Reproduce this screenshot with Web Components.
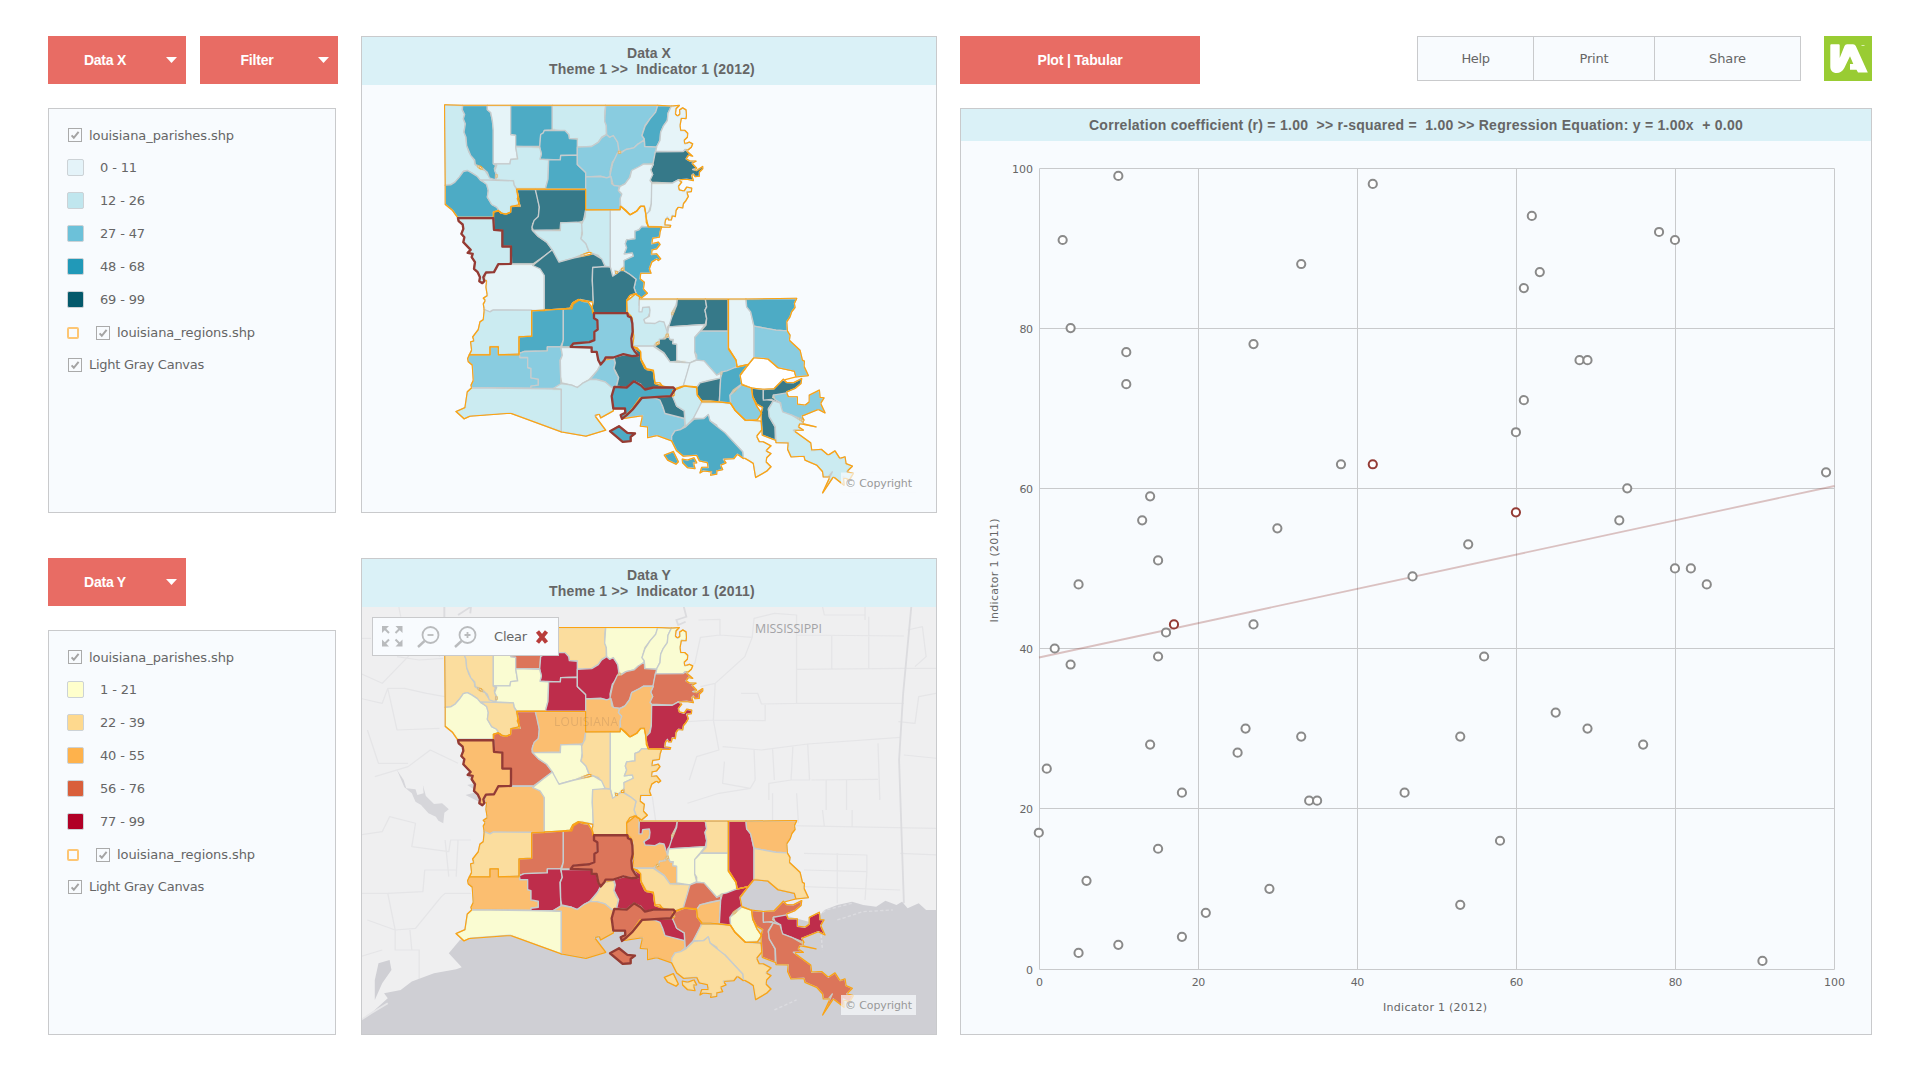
<!DOCTYPE html>
<html lang="en">
<head>
<meta charset="utf-8">
<title>Double Map</title>
<style>
body{margin:0;background:#fff;color:#666;font:13px "DejaVu Sans",Verdana,sans-serif}
</style>
</head>
<body>
<double-map></double-map>
<script>
const define=(n,c)=>customElements.define(n,c);
class Base extends HTMLElement{
  constructor(){super();this.attachShadow({mode:'open'});}
  connectedCallback(){this.shadowRoot.innerHTML=`<style>*{box-sizing:border-box}${this.css()}</style>${this.html()}`;this.ready&&this.ready();}
}

/* One line of text, spaced to a fixed measure */
define('fit-text',class extends Base{
  css(){return ':host{display:inline-block;white-space:pre;line-height:normal}';}
  html(){return '<span><slot></slot></span>';}
  ready(){
    const w=+this.getAttribute('w'),n=this.textContent.length,s=this.shadowRoot.querySelector('span');
    this.style.width=w+'px';
    s.style.letterSpacing=((w-s.getBoundingClientRect().width)/n)+'px';
  }
});

define('red-button',class extends Base{
  css(){return `:host{display:flex;align-items:center;width:138px;height:48px;background:#e86c64;color:#fff;font:bold 14px "Liberation Sans",Arial,sans-serif}
  .t{flex:1;display:flex;justify-content:center;padding-right:4px}i{width:11px;height:6px;background:#fff;clip-path:polygon(0 0,100% 0,50% 100%);margin-right:9px}
  :host([plain]) i{display:none}:host([plain]) .t{padding:0}`;}
  html(){return '<div class="t"><slot></slot></div><i></i>';}
});

define('check-box',class extends Base{
  css(){return ':host{display:block;width:14px;height:14px;flex:none}svg{display:block}';}
  html(){return '<svg width="14" height="14"><rect x=".5" y=".5" width="13" height="13" fill="#f8fbfe" stroke="#aaa"/><path d="M3.6 7.4 5.8 9.8 10.6 3.9" fill="none" stroke="#a4a4a4" stroke-width="2"/></svg>';}
});

define('map-legend',class extends Base{
  css(){return `:host{display:block;width:288px;height:405px;border:1px solid #c9cacc;background:#f8fbfe;padding:10px 0 0 18px}
  .r{display:flex;align-items:center;height:33px}.a{height:32px;padding-left:1px}.z{height:31px;padding-left:1px}
  .r fit-text{margin-left:7px}.r.c fit-text{margin-left:16px}
  .s{width:17px;height:17px;border:1.5px solid #ccd2d6;border-radius:2px}
  .o{width:12px;height:12px;border:2px solid #fdc674;border-radius:2px;margin-right:17px}`;}
  html(){
    const rows=this.getAttribute('rows').split(',').map(r=>{const[t,c,w]=r.split(':');return `<div class="r c"><span class="s" style="background:${c}"></span><fit-text w="${w}">${t}</fit-text></div>`}).join('');
    return `<div class="r a"><check-box></check-box><fit-text w="145">louisiana_parishes.shp</fit-text></div>${rows}
    <div class="r"><span class="o"></span><check-box></check-box><fit-text w="138">louisiana_regions.shp</fit-text></div>
    <div class="r z"><check-box></check-box><fit-text w="115">Light Gray Canvas</fit-text></div>`;
  }
});

/* Parishes: X colour, Y colour, region, origin, selected, outline */
const PX={a:'#e6f4f8',b:'#cbebf1',c:'#89cce0',d:'#4dabc5',e:'#367989'};
const PY={a:'#fafcd2',b:'#fbdd9e',c:'#fbbe70',d:'#dc755a',e:'#be2d4b'};
const OFF={N:[0,0],W:[0,569],E:[510,569]};
const PARISHES=`b b 1 N 0 44,43 98,45 97,58 104,72 100,85 106,100 102,125 108,140 110,165 117,185 133,210 135,222 150,234 165,240 175,255 190,266 197,270 150,270 142,258 125,247 112,240 100,243 88,260 75,275 62,283 46,284
d b 1 N 0 98,45 172,45 172,58 182,66 187,90 190,120 190,220 197,225 193,235 197,248 196,268 178,262 172,245 152,228 136,222 134,208 122,195 110,165 108,140 102,125 106,100 100,85 104,72 97,58
a a 1 N 0 172,45 242,45 242,132 257,134 257,168 263,205 242,207 240,220 190,220 190,120 187,90 182,66 172,58
d d 1 N 0 242,45 367,45 367,118 343,120 340,128 332,132 330,168 257,168 257,134 242,132
b b 1 N 0 367,45 527,45 525,60 524,90 529,105 529,132 515,140 505,155 485,168 442,170 442,145 418,144 416,132 405,122 367,118
d e 1 N 0 343,120 405,120 416,132 418,144 442,146 442,194 392,195 391,208 330,206 334,190 329,170 332,132 340,127
b a 1 N 0 257,168 329,170 334,190 330,206 356,208 354,266 346,295 260,295 252,283 250,271 197,268 202,256 194,240 200,224 192,220 240,220 242,207 263,205
d e 1 N 0 356,208 391,208 392,195 442,194 442,222 467,246 467,296 346,296 354,266
c e 1 N 0 442,170 485,168 505,156 515,142 530,132 539,140 550,135 560,150 565,160 566,182 555,205 547,215 540,245 543,258 530,262 512,257 467,259 467,246 442,222
c a 1 N 0 527,45 683,45 678,65 660,85 645,105 636,135 643,145 637,160 625,160 612,172 588,177 573,185 567,180 563,155 550,135 539,140 530,132 529,105 524,92
d a 1 N 0 683,45 724,47 714,68 712,90 700,107 692,125 690,148 680,170 644,168 643,145 636,135 645,108 660,85 677,65
a a 1 N 0 724,47 748,45 738,55 736,70 743,77 750,70 749,58 758,52 768,58 769,75 768,84 754,83 750,105 752,120 765,120 773,128 772,140 762,150 765,160 778,155 788,160 784,170 775,178 765,177 760,183 676,183 680,168 690,150 692,125 700,107 712,90 714,68
c d 1 N 0 573,187 588,177 612,172 625,160 643,148 644,168 680,170 676,185 670,220 640,221 630,228 605,240 598,262 585,280 568,288 550,285 545,265 540,255 548,218 562,188
e d 1 N 0 676,184 760,183 766,178 788,197 776,194 768,205 780,212 798,212 786,218 800,233 788,237 800,240 818,228 818,235 808,245 808,257 795,258 790,250 785,255 790,270 770,266 745,268 727,278 665,275 658,265 668,252 662,238 668,225 672,205
a c 1 N 0 640,221 670,221 662,238 668,252 660,270 668,280 666,300 664,340 655,368 648,370 643,348 632,347 620,362 600,373 588,360 572,347 570,320 575,310 565,300 570,288 585,280 600,260 605,240 628,228
c c 1 N 0 467,259 512,258 530,262 543,258 545,280 552,285 568,287 565,300 575,312 570,325 570,357 467,358
a e 1 N 0 665,278 727,278 745,268 755,275 745,288 748,298 762,302 770,290 785,293 784,303 770,305 775,318 768,330 760,340 758,352 745,350 738,360 736,378 727,375 724,388 716,388 712,380 706,390 704,403 722,405 720,410 655,409 649,395 648,372 660,360 664,340
d a 1 N 0 46,284 62,283 75,275 88,260 100,243 112,240 125,247 142,258 152,270 170,280 175,300 172,320 185,342 200,350 208,362 192,364 190,380 82,380 68,360 46,342
b b 1 N 0 152,268 250,271 252,283 260,297 262,312 267,325 265,343 243,348 242,365 228,371 215,368 208,362 200,350 185,342 172,320 175,300 170,282
e d 2 N 0 260,297 316,297 322,315 328,350 325,380 308,400 306,418 325,438 350,455 367,478 345,495 310,520 245,520 243,468 217,468 217,420 192,418 190,365 205,360 213,368 228,371 242,365 243,348 271,347 262,325 265,315
e c 2 N 0 316,297 467,297 467,358 460,392 440,397 392,397 391,418 310,420 306,410 312,390 325,378 328,350
b a 2 N 0 308,420 391,420 392,397 440,395 456,397 457,420 453,445 468,460 477,485 430,503 387,515 375,500 367,478 350,455 325,438
b b 2 N 0 467,358 541,358 541,530 525,527 515,510 505,495 490,490 478,485 468,460 453,445 457,430 455,400 465,380
a a 2 N 0 541,358 570,358 572,347 600,373 620,362 632,347 643,347 650,390 655,409 635,408 627,418 615,422 615,445 590,448 586,460 590,472 583,490 607,487 610,497 582,510 585,525 565,545 555,540 558,555 548,558 541,530
d b 2 N 0 655,409 695,409 690,425 688,440 668,443 665,460 685,455 690,462 680,475 666,478 664,492 680,490 692,505 685,510 680,505 665,515 658,535 663,548 632,548 630,565 643,575 640,595 652,608 635,622 622,615 618,608 612,592 618,566 600,552 582,540 582,510 610,497 607,487 583,490 590,472 586,460 590,448 615,445 615,422 627,418 635,408
b c 2 N 1 84,383 190,383 192,418 217,420 217,468 243,468 243,520 205,521 192,545 168,546 160,560 163,572 157,578 148,572 150,560 143,545 132,535 135,515 125,500 128,490 113,487 122,478 100,455 103,440 94,430 100,415 98,402 86,392
a c 2 N 0 205,521 308,521 335,535 343,550 343,660 185,660 180,665 163,658 160,640 166,630 160,623 172,615 168,590 170,572 163,565 168,546 192,545
e a 2 N 0 308,525 345,495 367,478 387,515 430,503 490,490 515,505 525,527 515,532 488,531 487,570 490,635 475,632 450,627 430,640 425,655 343,658 343,555 330,535
e b 2 N 0 488,531 525,528 541,530 548,557 558,550 572,540 580,540 600,552 618,566 612,592 618,608 600,615 590,630 590,668 488,668 486,650 490,635 487,570
b b 2 W 0 163,88 180,95 190,89 305,90 305,168 267,170 267,224 205,224 205,200 180,200 180,224 118,224 125,210 122,185 132,182 128,170 145,148 150,125 160,118
d d 3 W 0 305,92 343,90 400,86 400,180 392,200 352,200 352,212 283,214 267,220 267,170 305,168
d d 3 W 0 400,86 420,84 428,68 445,58 460,64 475,66 487,85 492,100 492,112 502,120 502,145 493,158 493,180 480,186 430,190 422,200 395,200 400,180
c d 3 W 1 492,99 592,99 594,108 603,112 607,130 608,155 604,175 606,200 615,215 625,226 606,228 580,222 550,232 527,232 523,240 512,253 505,240 500,215 485,215 485,202 422,200 430,190 478,186 493,180 493,155 503,148 502,120 492,114
c c 3 W 0 118,224 180,224 180,200 205,200 205,224 268,222 270,232 293,232 293,262 303,265 303,293 325,297 325,315 303,318 303,324 125,322 123,315 130,300 127,255 115,245 113,235
c e 3 W 0 268,220 283,214 352,212 352,200 392,200 397,225 390,240 392,290 393,312 370,325 303,325 303,318 325,315 325,297 303,293 303,265 293,262 293,232 270,232
a e 3 W 0 393,202 485,202 485,215 500,215 505,240 512,252 503,270 478,298 460,308 442,322 425,315 395,308 392,290 391,240 397,225
c b 3 W 0 512,253 525,240 550,235 556,248 552,265 558,280 566,292 558,322 545,322 525,305 500,298 480,298 503,270
e e 3 W 0 552,232 580,224 625,228 610,200 622,203 632,215 633,240 645,265 670,270 675,308 690,308 700,322 645,328 632,312 612,303 600,312 590,322 560,318 566,292 556,272 552,265 556,248
b a 3 W 0 125,323 303,325 394,327 394,455 241,399 120,408 102,416 78,394 105,382 112,335
b c 3 W 0 370,325 394,310 425,315 442,322 460,308 480,298 500,298 525,305 545,322 552,322 547,345 550,392 512,413 508,402 494,406 527,450 468,468 394,455 394,327
d d 3 W 1 553,320 590,322 612,303 632,315 645,328 670,322 730,322 735,328 722,348 636,353 608,388 590,405 576,416 572,405 586,398 585,385 550,385 545,348
d d 3 W 1 540,453 567,438 592,458 615,460 602,470 602,483 578,485
c c 4 E 0 120,353 180,352 188,380 195,398 253,415 255,437 240,450 225,452 215,468 215,482 170,466 143,472 143,440 121,438 128,406 68,415 98,385
e e 4 E 0 160,352 218,348 225,362 230,378 253,392 254,415 195,400 188,378 180,360
b d 4 E 0 218,332 255,317 290,320 292,345 305,362 300,380 280,415 256,440 253,392 230,378 218,350 224,342
b c 5 E 0 82,97 80,62 90,55 105,42 118,48 117,75 130,80 148,80 150,95 145,110 132,118 135,128 160,128 178,123 192,125 205,152 195,172 170,188 160,198 98,198 102,170 98,140 98,118 93,108
a e 5 E 0 118,57 232,57 228,75 215,100 215,125 203,140 203,160 192,125 178,123 165,130 135,128 132,118 148,108 150,90 148,80 128,82 126,95 117,95
e e 5 E 0 232,57 316,57 320,80 315,90 320,115 316,133 206,140 215,112 222,95 230,75
e b 5 E 0 316,57 384,57 384,153 302,153 318,135 320,115 315,90 320,80
e c 5 E 0 203,168 213,180 220,178 218,190 230,192 230,240 240,242 210,245 192,218 163,198 178,190 178,177 195,176
a a 5 E 0 206,140 316,133 300,153 284,172 284,215 290,238 270,248 230,242 230,192 218,190 220,178 210,178 203,160
c a 5 E 0 302,153 384,153 384,205 408,240 410,260 380,275 365,275 350,285 312,242 290,240 290,225 284,215 284,172
a e 6 E 0 386,57 438,57 440,80 452,95 462,140 462,232 445,253 412,260 408,240 386,205
d c 6 E 0 438,57 590,55 583,70 585,82 575,95 570,110 560,125 562,152 528,150 462,138 452,95 440,80
c b 6 E 0 462,138 528,150 562,152 570,165 568,180 600,210 607,240 613,243 612,258 625,286 588,290 583,273 533,262 503,236 462,232
a b 5 E 0 98,198 160,198 192,220 210,245 270,248 262,280 250,317 228,325 190,318 165,310 160,272 140,268 122,235 122,215
a d 5 E 0 270,248 290,240 312,242 350,285 362,280 362,294 330,300 300,308 290,322 250,317
e c 5 E 0 300,308 362,294 358,365 330,362 305,362 292,345 290,322
d e 5 E 0 367,275 380,272 405,262 445,253 420,285 425,312 400,330 390,345 392,368 358,365 362,294
c a 5 E 0 425,314 455,324 458,350 470,378 485,400 473,418 436,420 405,390 392,370 390,345 405,332
e d 7 E 0 455,324 490,328 490,355 520,362 505,385 508,410 525,440 526,480 487,465 483,400 488,382 470,372 458,350
e d 7 E 0 490,328 522,326 550,297 560,307 580,308 605,295 603,310 585,325 560,335 558,345 520,345 518,352 538,362 535,368 515,358 490,360
c e 7 E 0 520,345 560,338 565,350 592,350 592,372 615,375 628,365 628,345 658,330 660,352 672,353 662,370 675,398 655,388 620,402 605,408 612,420 575,405 545,395 542,368 525,358
b d 7 E 0 520,362 540,368 548,395 575,405 610,425 605,430 648,440 600,430 595,440 610,450 580,450 632,488 635,510 665,508 685,525 705,512 720,535 735,530 738,550 757,558 740,575 760,580 748,600 730,590 732,615 700,590 668,638 697,575 685,590 670,590 668,575 650,555 615,540 612,528 573,530 563,508 565,488 528,487 526,440 508,410 505,388
a b 4 E 0 305,366 358,366 392,370 405,390 436,420 483,423 485,450 470,468 478,485 490,485 513,497 498,512 513,520 500,533 498,545 513,560 500,573 467,592 460,550 448,542 430,532 428,515 400,485 375,458 355,448 350,435 330,422 325,405 310,415 280,415
d b 4 E 0 325,403 330,422 352,440 375,458 400,485 428,515 430,535 412,522 402,535 370,537 378,548 362,555 368,568 350,572 350,582 332,585 335,575 310,572 300,578 305,562 325,562 322,547 298,542 290,525 250,528 230,512 215,482 215,468 225,452 242,448 257,440 282,417 312,415
d b 4 E 0 193,525 220,514 235,545 228,552 203,540
d b 4 E 0 247,537 262,540 282,533 290,548 280,548 285,565 262,562 248,548`.split('\n').map(l=>{
  const p=l.split(' '),o=OFF[p[3]];
  return {x:p[0],y:p[1],r:p[2],sel:p[4]==='1',d:'M'+p.slice(5).map(q=>{const[a,b]=q.split(',');return (+a+o[0])+' '+(+b+o[1])}).join('L')+'Z'};
});
const LAKE='M972 801 1013 805 1043 831 1093 842 1098 859 1060 869 1032 895 1000 897 965 893 935 881 928 859 955 822Z';

/* Light gray canvas: land, county grid, water */
function basemap(){
  let lines='';
  const L=d=>lines+=`<path d="${d}"/>`;
  L('M0 445 60 460 75 415 120 415 180 430 230 440M0 370 60 400 130 320 150 290M75 415 100 540 215 535M228 170 228 240M105 170 110 200M0 265 30 265M100 320 160 330 225 325M20 540 50 640 130 640M40 680 130 650 190 600 265 640M210 240 215 320');
  L('M915 210 973 208 973 255 920 262 905 340 870 365M973 255 1060 262 1065 205 1120 190 1180 195 1180 460 1085 462 1075 430 1030 430M1060 262 1040 320 990 370 960 400 920 410M1180 255 1470 258M1275 255 1275 360M1180 358 1470 355M1375 200 1375 358M1250 170 1255 195 1365 195M1365 170 1365 210M1180 460 1470 460M960 400 955 510 1095 512 1095 465M885 515 955 510M955 510 970 600 910 620 890 690M980 590 1085 600 1210 582 1460 562M985 635 980 700 1055 715M1065 600 1068 690 1055 715 970 730 885 760M1115 595 1120 690M1170 590 1165 690M1210 582 1215 690 1165 690 1105 700 1105 750M1220 690 1400 688M1260 690 1260 780M1315 690 1315 780M1400 580 1405 750M1470 355 1558 355M1480 240 1520 230 1530 320 1500 350M1455 515 1500 520 1510 440 1558 430M1470 615 1558 625');
  L('M790 740 800 820 1558 835M885 820 885 910M970 820 970 910M1075 820 1080 905 1020 905M1200 910 1370 915 1370 965 1200 960M1290 910 1290 1060M1370 965 1365 1050M1460 910 1558 915M1200 1010 1460 1020M1115 730 1115 820M1180 730 1185 820M1250 780 1255 830M1330 780 1330 830');
  L('M0 855 60 845 80 800 150 820 140 890 240 905 245 870 300 870M75 1030 170 1025 175 960 260 960M75 1030 95 1140 150 1135 220 1040 230 1030 300 1030M95 1140 95 1200 160 1200 160 1290M135 1140 140 1200M0 1030 75 1030M230 870 240 980M265 870 260 980M20 1110 95 1140M0 1220 60 1200');
  return `<svg x="361" y="607" width="576" height="428"><rect width="576" height="428" fill="#efeff0"/>
  <g transform="translate(-1 -57) scale(.37 .3333)" fill="none">
  <g stroke="#e5e5e7" stroke-width="3.5" stroke-linejoin="round">${lines}</g>
  <g stroke="#dcdcdf" stroke-width="5"><path d="M1490 170 1468 430 1457 630 1470 1060"/><path d="M875 170 882 200 855 210 860 225 880 215M265 195 300 170 298 190M228 170V240"/></g>
  <path d="M100 660 118 690 125 715 150 718 155 735 172 730 170 705 178 738 200 762 222 760 240 778 228 788 225 820 212 812 205 800 185 790 165 765 150 755 140 730 120 712Z" fill="#d6d6da"/>
  <path d="M280 630 300 650 290 680 310 700 290 705 318 725 285 735 330 760 350 720 300 640Z" fill="#d6d6da"/>
  <path d="M0 1412 30 1390 75 1345 65 1330 110 1320 140 1295 200 1270 260 1258 275 1252 240 1210 270 1170 300 1155 700 1120 1060 1070 1213 1115 1240 1100 1255 1080 1290 1065 1330 1055 1360 1065 1395 1070 1420 1052 1450 1065 1465 1055 1480 1075 1510 1060 1530 1080 1558 1080V1600H0Z" fill="#cfcfd4"/>
  <path d="M40 1290 50 1240 80 1230 85 1260 60 1300 40 1350Z" fill="#cfcfd4"/>
  <path d="M0 1412 30 1390 75 1360" stroke="#e6e6e8" stroke-width="5"/>
  <path d="M1215 1115 1260 1080 1330 1060M1290 1110 1360 1085 1440 1080M1245 1140 1250 1200M1120 1380 1180 1350" stroke="#dcdce0" stroke-width="4" stroke-dasharray="9 6"/></g>
  <text x="394" y="26" font-size="12" textLength="67" lengthAdjust="spacingAndGlyphs" fill="#a3a3a6" style="font-family:'Open Sans','Noto Sans',sans-serif">MISSISSIPPI</text></svg>`;
}

define('parish-map',class extends Base{
  css(){return ':host{display:block;height:427px;overflow:hidden}svg{display:block}';}
  html(){
    const y=this.hasAttribute('base'),pal=y?PY:PX,k=y?'y':'x',top=y?607:84.5;
    const regions=[1,2,3,4,5,6,7].map(r=>`<g filter="url(#edge)">${PARISHES.filter(p=>p.r==r).map(p=>`<path d="${p.d}"/>`).join('')}</g>`).join('');
    return `<svg width="574" height="428" viewBox="362 ${top} 574 428" font-family="DejaVu Sans,Verdana,sans-serif">
    <defs><filter id="edge" x="-5%" y="-5%" width="110%" height="110%" color-interpolation-filters="sRGB"><feMorphology in="SourceAlpha" operator="erode" radius="3.6" result="in"/><feFlood flood-color="#fca311"/><feComposite in2="SourceAlpha" operator="in"/><feComposite in2="in" operator="out"/></filter></defs>
    ${y?basemap():''}
    <g transform="translate(430 ${y?612.6:90}) scale(.33333)" stroke-linejoin="round">
    <path d="${LAKE}" fill="${y?'#cfcfd4':'#fff'}" stroke="#fca311" stroke-width="3.5"/>
    <g stroke="#c6ccce" stroke-width="4">${PARISHES.map(p=>`<path d="${p.d}" fill="${pal[p[k]]}"/>`).join('')}</g>
    <g stroke="#000" stroke-width="4">${regions}</g>
    <g fill="none" stroke="#943b35" stroke-width="7">${PARISHES.filter(p=>p.sel).map(p=>`<path d="${p.d}"/>`).join('')}</g></g>
    ${y?`<text x="554" y="726" font-size="12" textLength="64" fill="#8a6a50" opacity=".22" style="font-family:'Open Sans','Noto Sans',sans-serif">LOUISIANA</text>`:''}
    <rect x="841" y="${y?995:472}" width="75" height="20" fill="#f8fbfe" opacity=".7"/>
    <text x="845" y="${y?1009:486}" font-size="11" textLength="67" fill="#999">© Copyright</text></svg>`;
  }
});

define('map-tools',class extends Base{
  css(){return ':host{position:absolute;left:10px;top:58px;width:187px;height:39px;border:1px solid #c9cacc;background:#f8fbfe;display:flex;align-items:center;padding-left:9px}svg{display:block;flex:none}fit-text{margin:0 8px 0 9px}';}
  html(){
    const arr='<g fill="#b9bbbd" stroke="#b9bbbd"><path stroke="none" d="M0 0h7L4.8 2.2 0 7z"/><path d="M2 2 7 7" stroke-width="2"/></g>';
    const glass=p=>`<svg width="37" height="24" fill="none" stroke="#b9bbbd" stroke-width="1.8"><circle cx="19.5" cy="10" r="8"/><path d="M13.500 16 7 22" stroke-width="2.4"/><path d="M16.500 10h6${p?'M19.500 7v6':''}"/></svg>`;
    return `<svg width="21" height="21" style="margin-right:8px">${arr}<g transform="translate(20.5 0)scale(-1 1)">${arr}</g><g transform="translate(0 20.5)scale(1 -1)">${arr}</g><g transform="translate(20.5 20.5)scale(-1 -1)">${arr}</g></svg>${glass(0)}${glass(1)}<fit-text w="33">Clear</fit-text><svg width="14" height="14"><path d="M2.500 1.500 11.500 12.500M11.500 1.500 2.500 12.500" stroke="#b83c3a" stroke-width="4"/></svg>`;
  }
});

define('map-panel',class extends Base{
  css(){return `:host{display:block;position:relative;width:576px;height:477px;border:1px solid #c9cacc;background:#f8fbfe;overflow:hidden}
  header{height:48px;background:#daf1f7;display:flex;flex-direction:column;align-items:center;padding:8px 0 0 0;font:bold 14px "Liberation Sans",Arial,sans-serif}fit-text{line-height:16px}.th{margin-left:6px}`;}
  html(){return `<header><fit-text w="${this.getAttribute('w')}">${this.getAttribute('label')}</fit-text><fit-text class="th" w="206">${this.getAttribute('theme')}</fit-text></header><slot></slot>`;}
});

define('scatter-plot',class extends Base{
  css(){return `:host{display:block;width:912px;height:927px;border:1px solid #c9cacc;background:#f8fbfe}
  header{height:32px;background:#daf1f7;display:flex;align-items:center;justify-content:center;font:bold 14px "Liberation Sans",Arial,sans-serif;padding-bottom:1px}svg{display:block}`;}
  html(){
    const pts='10,99 42,98 3,91 33,88 62,94 63,87 61,85 78,92 80,91 4,80 11,77 11,73 27,78 68,76 69,76 61,71 60,67 99,62 38,63 74,60 73,56 14,59 13,56 30,55 54,53 15,51 47,49 80,50 82,50 84,48 5,48 16,42 27,43 2,40 15,39 4,38 56,39 65,32 69,30 76,28 26,30 25,27 33,29 53,29 14,28 1,25 18,22 34,21 35,21 46,22 0,17 15,15 58,16 6,11 29,10 21,7 18,4 10,3 5,2 53,8 91,1 42,63r 60,57r 17,43r';
    const X=v=>1039.1+v*7.952,Y=v=>969.1-v*8.01;
    let s='';
    for(let v=0;v<=100;v+=20){
      const gx=Math.round(X(v)-.5)+.5,gy=Math.round(Y(v)-.5)+.5;
      s+=`<path d="M${gx} 168.5V969.5M1039.5 ${gy}H1834.5" stroke="#c9cacc"/>`;
      const w=v>99?21:v?13.5:6.5;
      s+=`<text x="${gx}" y="986" text-anchor="middle" textLength="${w}">${v}</text><text x="1033" y="${gy+4}" text-anchor="end" textLength="${w}">${v}</text>`;
    }
    s+=`<path d="M1039 657.5L1834.5 486" stroke="#943b35" stroke-opacity=".3" stroke-width="1.8"/>`;
    s+=pts.split(' ').map(p=>{const[a,b]=p.split(',');const r=b.endsWith('r');return `<circle cx="${X(+a)-.3}" cy="${Y(parseInt(b))-.2}" r="4.1" fill="#fff" stroke="${r?'#943b35':'#8a8a8a'}" stroke-width="2"/>`}).join('');
    return `<header><fit-text w="654">Correlation coefficient (r) = 1.00  &gt;&gt; r-squared =  1.00 &gt;&gt; Regression Equation: y = 1.00x  + 0.00</fit-text></header>
    <svg width="910" height="893" viewBox="961 141 910 893" fill="#666" font-size="11" font-family="DejaVu Sans,Verdana,sans-serif">${s}
    <text x="1383" y="1011" textLength="104">Indicator 1 (2012)</text><text transform="translate(998 622.5) rotate(-90)" textLength="104">Indicator 1 (2011)</text></svg>`;
  }
});

define('top-links',class extends Base{
  css(){return ':host{display:flex;width:384px;height:45px;border:1px solid #c9cacc;background:#f8fbfe}div{display:flex;align-items:center;justify-content:center;border-right:1px solid #c9cacc}div:last-child{border:0}';}
  html(){return '<div style="width:116px"><fit-text w="28">Help</fit-text></div><div style="width:121px"><fit-text w="29">Print</fit-text></div><div style="flex:1"><fit-text w="37">Share</fit-text></div>';}
});

define('ia-logo',class extends Base{
  css(){return ':host{display:block;width:48px;height:45px;margin-left:23px}svg{display:block}';}
  html(){return '<svg width="48" height="45"><rect width="48" height="45" fill="#9c3"/><path d="M7.300 8.300H14.700Q15.700 8.300 15.700 9.300V22L20.500 10Q21.200 8.300 23 8.300H29Q31 8.300 31.800 10L43.800 36.500H34L32.500 33.800H26V28H29.300L26 20.300 20.300 32C18.500 35.500 15.800 37 12.800 37 8.500 37 6.300 34.500 6.300 30.500V9.300Q6.300 8.300 7.300 8.300Z" fill="#fff"/><path d="M37.500 9.500h3" stroke="#d9efb0"/></svg>';}
});

define('double-map',class extends Base{
  css(){return `:host{display:flex;width:1920px;height:1080px;padding:36px 48px 0;overflow:hidden;background:#fff}
  .c{display:flex;flex-direction:column}.l{width:313px}.m{width:599px}.r{width:912px}.row{display:flex}
  .l .row{gap:14px;height:72px}.l .row.b{margin-top:45px}map-panel{margin-bottom:45px}.r .row{height:72px}.sp{flex:1}`;}
  html(){return `<div class="c l">
  <div class="row"><red-button><fit-text w="42">Data X</fit-text></red-button><red-button><fit-text w="33">Filter</fit-text></red-button></div>
  <map-legend rows="0 - 11:#e4f3f9:37,12 - 26:#c0e6ee:45,27 - 47:#6cc1d9:45,48 - 68:#2199b8:45,69 - 99:#04596b:45"></map-legend>
  <div class="row b"><red-button><fit-text w="42">Data Y</fit-text></red-button></div>
  <map-legend rows="1 - 21:#ffffcc:37,22 - 39:#fed98e:45,40 - 55:#feb24c:45,56 - 76:#d95f3b:45,77 - 99:#b10026:45"></map-legend></div>
  <div class="c m"><map-panel label="Data X" w="44" theme="Theme 1 &gt;&gt;  Indicator 1 (2012)"><parish-map></parish-map></map-panel>
  <map-panel label="Data Y" w="44" theme="Theme 1 &gt;&gt;  Indicator 1 (2011)"><parish-map base></parish-map><map-tools></map-tools></map-panel></div>
  <div class="c r"><div class="row"><red-button plain style="width:240px"><fit-text w="85">Plot | Tabular</fit-text></red-button><div class="sp"></div><top-links></top-links><ia-logo></ia-logo></div><scatter-plot></scatter-plot></div>`;}
});
</script>
</body>
</html>
